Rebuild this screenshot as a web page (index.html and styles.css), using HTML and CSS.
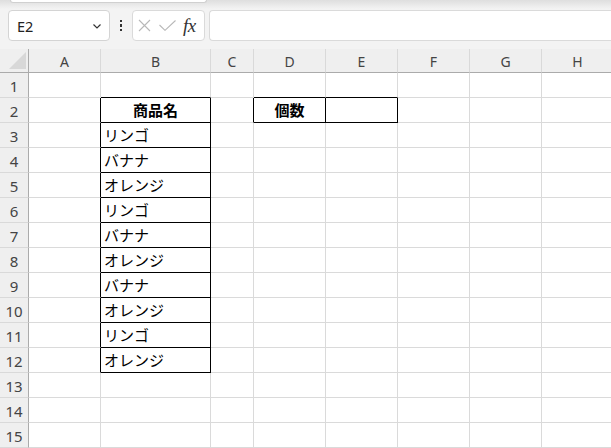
FILE: index.html
```html
<!DOCTYPE html>
<html lang="ja">
<head>
<meta charset="utf-8">
<title>Sheet</title>
<link rel="stylesheet" href="styles.css">
</head>
<body>
<div class="app">
  <div class="topstrip"><div class="ribbon-edge"></div></div>
  <div class="fbar">
    <div class="namebox">
      <span class="ref">E2</span>
      <svg class="chev" width="8" height="5" viewBox="0 0 8 5"><path d="M0.5 0.5 L4 4 L7.5 0.5" fill="none" stroke="#333" stroke-width="1.2"/></svg>
    </div>
    <div class="dots"><i></i><i></i><i></i></div>
    <div class="funcbox">
      <svg width="13" height="13" viewBox="0 0 13 13"><path d="M1 1 L12 12 M12 1 L1 12" stroke="#b8b8b8" stroke-width="1.1" fill="none"/></svg>
      <svg width="17" height="11" viewBox="0 0 17 11"><path d="M0.5 5 L6 10.3 L16.5 0.5" stroke="#b8b8b8" stroke-width="1.1" fill="none"/></svg>
      <span class="fx">fx</span>
    </div>
    <div class="finput"></div>
  </div>
  <div class="sheet">
    <div class="corner"><svg width="17" height="17" viewBox="0 0 17 17"><path d="M17 0 L17 17 L0 17 Z" fill="#d8d8d8"/></svg></div>
    <div class="ch">A</div><div class="ch">B</div><div class="ch">C</div><div class="ch">D</div><div class="ch">E</div><div class="ch">F</div><div class="ch">G</div><div class="ch">H</div>

    <div class="rh">1</div><div class="c"></div><div class="c bb"></div><div class="c"></div><div class="c bb"></div><div class="c bb"></div><div class="c"></div><div class="c"></div><div class="c"></div>
    <div class="rh">2</div><div class="c br"></div><div class="c bb br hd">商品名</div><div class="c br"></div><div class="c bb br hd">個数</div><div class="c bb br"></div><div class="c"></div><div class="c"></div><div class="c"></div>
    <div class="rh">3</div><div class="c br"></div><div class="c bb br t">リンゴ</div><div class="c"></div><div class="c"></div><div class="c"></div><div class="c"></div><div class="c"></div><div class="c"></div>
    <div class="rh">4</div><div class="c br"></div><div class="c bb br t">バナナ</div><div class="c"></div><div class="c"></div><div class="c"></div><div class="c"></div><div class="c"></div><div class="c"></div>
    <div class="rh">5</div><div class="c br"></div><div class="c bb br t">オレンジ</div><div class="c"></div><div class="c"></div><div class="c"></div><div class="c"></div><div class="c"></div><div class="c"></div>
    <div class="rh">6</div><div class="c br"></div><div class="c bb br t">リンゴ</div><div class="c"></div><div class="c"></div><div class="c"></div><div class="c"></div><div class="c"></div><div class="c"></div>
    <div class="rh">7</div><div class="c br"></div><div class="c bb br t">バナナ</div><div class="c"></div><div class="c"></div><div class="c"></div><div class="c"></div><div class="c"></div><div class="c"></div>
    <div class="rh">8</div><div class="c br"></div><div class="c bb br t">オレンジ</div><div class="c"></div><div class="c"></div><div class="c"></div><div class="c"></div><div class="c"></div><div class="c"></div>
    <div class="rh">9</div><div class="c br"></div><div class="c bb br t">バナナ</div><div class="c"></div><div class="c"></div><div class="c"></div><div class="c"></div><div class="c"></div><div class="c"></div>
    <div class="rh">10</div><div class="c br"></div><div class="c bb br t">オレンジ</div><div class="c"></div><div class="c"></div><div class="c"></div><div class="c"></div><div class="c"></div><div class="c"></div>
    <div class="rh">11</div><div class="c br"></div><div class="c bb br t">リンゴ</div><div class="c"></div><div class="c"></div><div class="c"></div><div class="c"></div><div class="c"></div><div class="c"></div>
    <div class="rh">12</div><div class="c br"></div><div class="c bb br t">オレンジ</div><div class="c"></div><div class="c"></div><div class="c"></div><div class="c"></div><div class="c"></div><div class="c"></div>
    <div class="rh">13</div><div class="c"></div><div class="c"></div><div class="c"></div><div class="c"></div><div class="c"></div><div class="c"></div><div class="c"></div><div class="c"></div>
    <div class="rh">14</div><div class="c"></div><div class="c"></div><div class="c"></div><div class="c"></div><div class="c"></div><div class="c"></div><div class="c"></div><div class="c"></div>
    <div class="rh">15</div><div class="c"></div><div class="c"></div><div class="c"></div><div class="c"></div><div class="c"></div><div class="c"></div><div class="c"></div><div class="c"></div>
  </div>
</div>
</body>
</html>
```

FILE: styles.css
```css
html, body {
  margin: 0;
  padding: 0;
  overflow: hidden;
}
body {
  width: 611px;
  height: 448px;
  background: #f3f3f3;
  font-family: "Noto Sans CJK JP", "Noto Sans", sans-serif;
}
.app {
  display: flex;
  flex-direction: column;
  width: 611px;
  height: 448px;
  overflow: hidden;
}
.topstrip {
  height: 10px;
  background: linear-gradient(#dedede, #f3f3f3 9px);
  padding-left: 10px;
  box-sizing: border-box;
}
.ribbon-edge {
  width: 195px;
  height: 2px;
  background: #ffffff;
  border: 1px solid #d0d0d0;
  border-top: none;
  border-radius: 0 0 4px 4px;
}
.fbar {
  display: flex;
  align-items: center;
  height: 31px;
  padding-left: 8px;
}
.namebox {
  width: 102px;
  height: 31px;
  box-sizing: border-box;
  background: #fff;
  border: 1px solid #d4d4d4;
  border-radius: 4px;
  display: flex;
  align-items: center;
  justify-content: space-between;
  padding: 0 8px 0 8px;
  font-family: "Noto Sans", sans-serif;
  font-size: 14.5px;
  color: #222;
}
.chev { margin-top: 1px; }
.dots {
  width: 22px;
  display: flex;
  flex-direction: column;
  align-items: center;
  gap: 2px;
}
.dots i {
  display: block;
  width: 2.5px;
  height: 2.5px;
  background: #333;
}
.funcbox {
  width: 73px;
  height: 31px;
  box-sizing: border-box;
  background: #fff;
  border: 1px solid #dadada;
  border-radius: 4px;
  display: flex;
  align-items: center;
  padding-left: 5px;
  gap: 8px;
}
.fx {
  font-family: "Liberation Serif", serif;
  font-style: italic;
  font-size: 19px;
  color: #333;
  margin-left: -1px;
  letter-spacing: -0.5px;
  line-height: 1;
}
.finput {
  flex: 1;
  margin-left: 4px;
  height: 31px;
  box-sizing: border-box;
  background: #fff;
  border: 1px solid #dadada;
  border-right: none;
  border-radius: 4px 0 0 4px;
}
.sheet {
  margin-top: 8px;
  display: grid;
  grid-template-columns: 29px 72px 110px 43px 72px 72px 72px 72px 72px;
  grid-template-rows: 24px repeat(15, 25px);
  background: #fff;
}
.sheet > div {
  box-sizing: border-box;
}
.corner {
  background: #efefef;
  border-right: 1px solid #ababab;
  border-bottom: 1px solid #ababab;
  display: flex;
  align-items: flex-end;
  justify-content: flex-end;
  padding: 0 2px 3px 0;
}
.corner svg { display: block; }
.ch {
  background: #efefef;
  border-right: 1px solid #d9d9d9;
  border-bottom: 1px solid #ababab;
  display: flex;
  align-items: center;
  justify-content: center;
  font-family: "Noto Sans", sans-serif;
  font-size: 14px;
  color: #444;
  padding-top: 1px;
}
.rh {
  background: #efefef;
  border-right: 1px solid #ababab;
  border-bottom: 1px solid #d9d9d9;
  display: flex;
  align-items: center;
  justify-content: center;
  font-family: "Noto Sans", sans-serif;
  font-size: 15px;
  color: #444;
  padding-top: 1px;
}
.c {
  border-right: 1px solid #dadada;
  border-bottom: 1px solid #dadada;
  font-size: 15px;
  color: #000;
  line-height: 24px;
  white-space: nowrap;
  overflow: hidden;
}
.c.bb { border-bottom-color: #000; }
.c.br { border-right-color: #000; }
.t {
  padding-left: 3px;
}
.hd {
  font-weight: bold;
  text-align: center;
}
```
